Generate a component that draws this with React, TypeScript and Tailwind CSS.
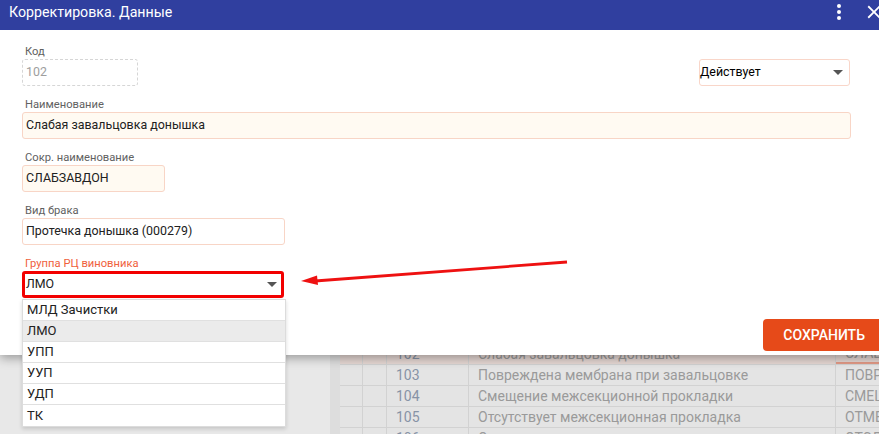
import React from 'react';

const groups = ['МЛД Зачистки', 'ЛМО', 'УПП', 'УУП', 'УДП', 'ТК'];

const rows = [
  { code: '102', name: 'Слабая завальцовка донышка', short: 'СЛАБЗАВДОН', active: true },
  { code: '103', name: 'Повреждена мембрана при завальцовке', short: 'ПОВРМЕМБР' },
  { code: '104', name: 'Смещение межсекционной прокладки', short: 'СМЕЩМЕЖПР' },
  { code: '105', name: 'Отсутствует межсекционная прокладка', short: 'ОТМЕЖПР' },
  { code: '106', name: 'Отслоение покрытия', short: 'ОТСЛПОКР' },
];

function Caret({ className }: { className?: string }) {
  return (
    <svg width="10" height="5" viewBox="0 0 10 5" className={className}>
      <path d="M0 0h10L5 5z" fill="#555" />
    </svg>
  );
}

function Label({ children, className }: { children: React.ReactNode; className?: string }) {
  return (
    <div className={`pl-[3px] text-[11.2px] leading-[14px] ${className ?? 'text-[#616161]'}`}>{children}</div>
  );
}

export default function App() {
  return (
    <div className="w-[879px] h-[434px] overflow-hidden bg-[#e8e8e8] font-['Roboto',sans-serif]">
      {/* dialog */}
      <div className="relative z-10 w-[893px] bg-white shadow-[0_3px_10px_rgba(0,0,0,0.35)]">
        <div className="h-[30px] flex items-start bg-[#303f9f] text-white">
          <div className="pl-[9px] text-[14.2px] leading-[24px]">Корректировка. Данные</div>
          <div className="ml-auto flex items-start">
            <svg width="24" height="24" viewBox="0 0 24 24">
              <circle cx="12" cy="6" r="2" fill="white" />
              <circle cx="12" cy="12" r="2" fill="white" />
              <circle cx="12" cy="18" r="2" fill="white" />
            </svg>
            <svg width="22" height="22" viewBox="0 0 24 24" className="ml-[12px] mr-[8px] mt-[1px]">
              <path
                d="M19 6.41L17.59 5 12 10.59 6.41 5 5 6.41 10.59 12 5 17.59 6.41 19 12 13.41 17.59 19 19 17.59 13.41 12z"
                fill="white"
              />
            </svg>
          </div>
        </div>

        <div className="relative pt-[15px] pl-[22px] pb-[4px] text-[12.4px] text-[#212121]">
          <div className="w-[828px] flex items-end justify-between">
            <div>
              <Label>Код</Label>
              <div className="w-[116px] h-[27px] flex items-center pl-[3px] border border-dashed border-[#d6d6d6] rounded-[3px] text-[#9e9e9e]">
                102
              </div>
            </div>
            <div className="w-[151px] h-[27px] flex items-center justify-between pr-[6px] border border-[#f9d6c9] rounded-[3px] text-black">
              <span>Действует</span>
              <Caret />
            </div>
          </div>

          <div className="mt-[12px]">
            <Label>Наименование</Label>
            <div className="w-[829px] h-[27px] flex items-center pl-[3px] bg-[#fffaf2] border border-[#f8d5c6] rounded-[3px]">
              Слабая завальцовка донышка
            </div>
          </div>

          <div className="mt-[12px]">
            <Label>Сокр. наименование</Label>
            <div className="w-[143px] h-[27px] flex items-center pl-[3px] bg-[#fffaf2] border border-[#f8d5c6] rounded-[3px]">
              СЛАБЗАВДОН
            </div>
          </div>

          <div className="mt-[12px]">
            <Label>Вид брака</Label>
            <div className="w-[263px] h-[27px] flex items-center pl-[3px] bg-white border border-[#f8d5c6] rounded-[3px]">
              Протечка донышка (000279)
            </div>
          </div>

          <div className="mt-[12px]">
            <Label className="text-[#f0603c]">Группа РЦ виновника</Label>
            <div className="relative w-[262px]">
              <div className="h-[27px] flex items-center justify-between pl-[1px] pr-[4px] border-[3px] border-[#f20000] rounded-[3px]">
                <span>ЛМО</span>
                <Caret />
              </div>
              {/* open list */}
              <div className="absolute left-0 top-[28px] z-20 w-[264px] bg-white border border-[#dcdcdc] shadow-[0_2px_4px_rgba(0,0,0,0.15)] text-[13px] text-[#222]">
                {groups.map((g) => (
                  <div
                    key={g}
                    className={`h-[21px] flex items-center pl-[4px] border-b border-[#e0e0e0] last:border-b-0 ${
                      g === 'ЛМО' ? 'bg-[#ebebeb]' : ''
                    }`}
                  >
                    {g}
                  </div>
                ))}
              </div>
            </div>
          </div>

          <div className="mt-[21px] flex justify-end pr-[8px]">
            <button className="h-[32px] px-[20px] rounded-[4px] bg-[#e64a19] text-white text-[14px] font-medium">
              СОХРАНИТЬ
            </button>
          </div>

          {/* annotation arrow */}
          <svg
            width="280"
            height="40"
            viewBox="0 0 280 40"
            className="absolute left-[295px] top-[220px] pointer-events-none"
          >
            <line x1="272" y1="12" x2="20" y2="31" stroke="#ee1111" strokeWidth="2.8" />
            <polygon points="6,31 22,25.5 23,35" fill="#ee1111" />
          </svg>
        </div>
      </div>

      {/* background grid */}
      <div className="-mt-[11px] flex text-[14px] text-[#9a9a9a]">
        <div className="w-[330px] shrink-0" />
        <div className="w-[10px] shrink-0 bg-[#dddddd]" />
        <div className="flex-1 bg-[#e4e4e4]">
          {rows.map((r) => (
            <div
              key={r.code}
              className={`h-[21px] flex border-b border-[#d2d2d2] ${r.active ? 'bg-[#e6d8d4]' : ''}`}
            >
              <div className="w-[23px] border-r border-[#d2d2d2]" />
              <div className="w-[24px] border-r border-[#d2d2d2]" />
              <div className="w-[82px] pl-[9px] flex items-center border-r border-[#d2d2d2] text-[#8793a6]">
                {r.code}
              </div>
              <div className="w-[367px] pl-[9px] flex items-center border-r border-[#d2d2d2] whitespace-nowrap">
                {r.name}
              </div>
              <div
                className={`flex-1 pl-[9px] flex items-center whitespace-nowrap ${
                  r.active ? 'border-b-2 border-[#e39a86]' : ''
                }`}
              >
                {r.short}
              </div>
            </div>
          ))}
        </div>
      </div>
    </div>
  );
}
